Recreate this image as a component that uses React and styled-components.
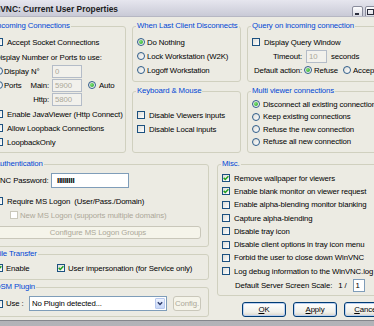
import React from "react";
import styled, { createGlobalStyle } from "styled-components";

const FONT = `"Liberation Sans", Arial, sans-serif`;

const GlobalStyle = createGlobalStyle`
  html, body { margin: 0; padding: 0; }
  body {
    width: 374px; height: 326px; overflow: hidden;
    background: linear-gradient(#8f9096, #b3b3b8);
    font-family: ${FONT}; font-size: 7.8px; letter-spacing: -0.12px; color: #000;
  }
  * { box-sizing: border-box; }
`;

const Window = styled.div`
  width: 410px;
  margin-left: -16px;
  background: #ecebe3;
  border-bottom: 1px solid #85868c;
`;

const TitleBar = styled.div`
  height: 17px;
  display: flex;
  align-items: flex-start;
  padding: 3px 4px 0 1px;
  overflow: hidden;
  background: linear-gradient(#e6e6ee, #c9cad6);
  border-bottom: 1px solid #b6b7c3;
`;

const Title = styled.div`
  flex: 1;
  font-weight: bold;
  font-size: 8.4px;
  letter-spacing: 0;
  line-height: 13px;
  color: #1c1c22;
  white-space: nowrap;
`;

const Controls = styled.div`
  display: flex;
  gap: 2px;
  margin-top: 3px;
`;

const CtrlButton = styled.div`
  width: 11px;
  height: 12px;
  border: 1px solid #8a8c9c;
  border-radius: 2px;
  background: linear-gradient(#fdfdfe, #d6d7e0);
  display: flex;
  align-items: center;
  justify-content: center;
`;

const Body = styled.div`
  display: flex;
  flex-direction: column;
  gap: 6px;
  padding: 4px 6px 3px;
`;

const TopGrid = styled.div`
  display: grid;
  grid-template-columns: 136px 109px 141px;
  column-gap: 6px;
  height: 132px;
`;

const BottomGrid = styled.div`
  display: grid;
  grid-template-columns: 219px 171px;
  column-gap: 8px;
`;

const Stack = styled.div`
  display: flex;
  flex-direction: column;
  gap: ${(p) => p.$gap ?? 4}px;
  min-height: 0;
`;

const Group = styled.fieldset`
  margin: 0;
  min-width: 0;
  border: 1px solid #d0d0bf;
  border-radius: 3px;
  padding: ${(p) => p.$pt ?? 4}px 4px 0;
  height: ${(p) => (p.$h ? `${p.$h}px` : "auto")};
  flex: ${(p) => (p.$grow ? 1 : "none")};
  display: flex;
  flex-direction: column;
`;

const Legend = styled.legend`
  padding: 0 1px;
  margin-left: -1px;
  color: #0046d5;
  line-height: 10px;
  white-space: nowrap;
`;

const Row = styled.div`
  display: flex;
  align-items: center;
  flex: none;
  height: ${(p) => p.$h ?? 14}px;
  gap: ${(p) => p.$gap ?? 0}px;
  margin-top: ${(p) => p.$mt ?? 0}px;
  padding-left: ${(p) => p.$indent ?? 0}px;
  white-space: pre;
  color: ${(p) => (p.$disabled ? "#aca899" : "inherit")};
`;

const Option = styled.label`
  display: inline-flex;
  align-items: center;
  gap: ${(p) => p.$gap ?? 4}px;
  width: ${(p) => (p.$w ? `${p.$w}px` : "auto")};
  margin-left: ${(p) => p.$ml ?? 0}px;
  white-space: pre;
  color: ${(p) => (p.$disabled ? "#aca899" : "inherit")};
`;

const CheckBox = styled.span`
  flex: none;
  width: 8px;
  height: 8px;
  border: 1px solid ${(p) => (p.$disabled ? "#cac8bb" : "#1c5180")};
  background: ${(p) =>
    p.$disabled ? "#fff" : "linear-gradient(135deg, #dcdcd7, #ffffff)"};
  display: flex;
  align-items: center;
  justify-content: center;
`;

const RadioCircle = styled.span`
  flex: none;
  width: 8px;
  height: 8px;
  border-radius: 50%;
  border: 1px solid #2f5d8a;
  background: linear-gradient(135deg, #dcdcd7, #ffffff);
  display: flex;
  align-items: center;
  justify-content: center;
`;

const RadioDot = styled.span`
  width: 4px;
  height: 4px;
  border-radius: 50%;
  background: radial-gradient(circle at 35% 35%, #7ee27a, #21a121);
`;

const Check = ({ checked, disabled }) => (
  <CheckBox $disabled={disabled}>
    {checked && (
      <svg width="6" height="6" viewBox="0 0 6 6">
        <path d="M0.7 2.9 L2.3 4.5 L5.4 1.2" fill="none" stroke="#21a121" strokeWidth="1.5" />
      </svg>
    )}
  </CheckBox>
);

const Radio = ({ checked }) => <RadioCircle>{checked && <RadioDot />}</RadioCircle>;

const Field = styled.input`
  flex: none;
  width: ${(p) => p.$w}px;
  height: ${(p) => p.$hh ?? 13}px;
  margin: 0;
  padding: 0 2px;
  border: 1px solid ${(p) => (p.disabled ? "#b4bcc8" : "#7f9db9")};
  background: ${(p) => (p.disabled ? "#f2f1ec" : "#fff")};
  color: ${(p) => (p.disabled ? "#aca899" : "#000")};
  font: inherit;
  letter-spacing: inherit;
  line-height: 11px;
  outline: none;
`;

const PortGrid = styled.div`
  display: grid;
  grid-template-columns: 36px 21px 30px auto;
  grid-auto-rows: 14px;
  align-items: center;
  flex: none;
`;

const PortLabel = styled.span`
  justify-self: ${(p) => (p.$left ? "start" : "end")};
  padding-right: ${(p) => (p.$left ? 0 : 3)}px;
`;

const AutoCell = styled.div`
  padding-left: 6px;
`;

const PassLabel = styled.span`
  width: 56px;
`;

const PasswordBox = styled.div`
  width: 78px;
  height: 15px;
  border: 1px solid #7f9db9;
  background: #fff;
  padding-left: 5px;
  display: flex;
  align-items: center;
  font-weight: bold;
  letter-spacing: -0.3px;
  font-size: 8px;
`;

const WinButton = styled.button`
  flex: none;
  width: ${(p) => (p.$w ? `${p.$w}px` : "44px")};
  height: ${(p) => p.$hh ?? 15}px;
  margin: ${(p) => p.$m ?? 0};
  padding: 0;
  font: inherit;
  letter-spacing: inherit;
  border-radius: 3px;
  border: 1px solid ${(p) => (p.disabled ? "#c9c7ba" : "#003c74")};
  background: ${(p) =>
    p.disabled ? "#f5f4ea" : "linear-gradient(#ffffff, #f0f0ea 70%, #d8d4c8)"};
  color: ${(p) => (p.disabled ? "#aca899" : "#000")};
  box-shadow: ${(p) =>
    p.disabled ? "none" : "inset 0 0 0 1px #bcd0f0"};
  display: flex;
  align-items: center;
  justify-content: center;
`;

const Combo = styled.div`
  width: 138px;
  height: 15px;
  border: 1px solid #7f9db9;
  background: #fff;
  display: flex;
  align-items: center;
  padding-left: 2px;
  margin-right: 6px;
`;

const ComboText = styled.span`
  flex: 1;
`;

const ComboArrow = styled.span`
  width: 10px;
  height: 11px;
  margin-right: 1px;
  border: 1px solid #b8c9ee;
  border-radius: 1px;
  background: linear-gradient(#eef3fe, #c6d6f8);
  display: flex;
  align-items: center;
  justify-content: center;
`;

const ButtonRow = styled.div`
  display: flex;
  justify-content: flex-end;
  gap: 7px;
  height: 15px;
`;

const ScaleBox = styled.div`
  width: 12px;
  height: 13px;
  border: 1px solid #7f9db9;
  background: #fff;
  padding-left: 2px;
  display: flex;
  align-items: center;
`;

export default function App() {
  return (
    <>
      <GlobalStyle />
      <Window>
        <TitleBar>
          <Title>WinVNC: Current User Properties</Title>
          <Controls>
            <CtrlButton>
              <svg width="7" height="8" viewBox="0 0 7 8">
                <rect x="1" y="5" width="4" height="2" fill="#2b2d3c" />
              </svg>
            </CtrlButton>
            <CtrlButton>
              <svg width="7" height="8" viewBox="0 0 7 8">
                <rect x="0.5" y="1.5" width="6" height="5" fill="none" stroke="#2b2d3c" />
              </svg>
            </CtrlButton>
            <CtrlButton style={{ marginLeft: 1 }}>
              <svg width="7" height="8" viewBox="0 0 7 8">
                <path d="M1 1.5 L6 6.5 M6 1.5 L1 6.5" stroke="#2b2d3c" strokeWidth="1.3" />
              </svg>
            </CtrlButton>
          </Controls>
        </TitleBar>
        <Body>
          <TopGrid>
            <Group $pt={4}>
              <Legend>Incoming Connections</Legend>
              <Row>
                <Option><Check />Accept Socket Connections</Option>
              </Row>
              <Row $mt={1}>Display Number or Ports to use:</Row>
              <PortGrid>
                <Option $gap={1}><Radio />Display</Option>
                <PortLabel $left>N°</PortLabel>
                <Field $w={30} disabled defaultValue="0" />
                <span />
                <Option $gap={1}><Radio />Ports</Option>
                <PortLabel>Main:</PortLabel>
                <Field $w={30} disabled defaultValue="5900" />
                <AutoCell>
                  <Option $gap={3}><Radio checked />Auto</Option>
                </AutoCell>
                <span />
                <PortLabel>Http:</PortLabel>
                <Field $w={30} disabled defaultValue="5800" />
                <span />
              </PortGrid>
              <Row $mt={1}>
                <Option><Check />Enable JavaViewer (Http Connect)</Option>
              </Row>
              <Row>
                <Option><Check />Allow Loopback Connections</Option>
              </Row>
              <Row>
                <Option><Check />LoopbackOnly</Option>
              </Row>
            </Group>
            <Stack>
              <Group $h={61} $pt={4}>
                <Legend>When Last Client Disconnects</Legend>
                <Row><Option $gap={2}><Radio checked />Do Nothing</Option></Row>
                <Row><Option $gap={2}><Radio />Lock Workstation (W2K)</Option></Row>
                <Row><Option $gap={2}><Radio />Logoff Workstation</Option></Row>
              </Group>
              <Group $grow $pt={12}>
                <Legend>Keyboard &amp; Mouse</Legend>
                <Row><Option><Check />Disable Viewers inputs</Option></Row>
                <Row><Option><Check />Disable Local inputs</Option></Row>
              </Group>
            </Stack>
            <Stack>
              <Group $h={61} $pt={4}>
                <Legend>Query on incoming connection</Legend>
                <Row><Option><Check />Display Query Window</Option></Row>
                <Row $indent={21} $gap={4}>
                  Timeout:
                  <Field $w={21} disabled defaultValue="10" />
                  seconds
                </Row>
                <Row $indent={2} $gap={2}>
                  Default action:
                  <Option $gap={2}><Radio checked />Refuse</Option>
                  <Option $gap={2} $ml={3}><Radio />Accept</Option>
                </Row>
              </Group>
              <Group $grow $pt={2}>
                <Legend>Multi viewer connections</Legend>
                <Row $h={12.5}><Option $gap={3}><Radio checked />Disconnect all existing connections</Option></Row>
                <Row $h={12.5}><Option $gap={3}><Radio />Keep existing connections</Option></Row>
                <Row $h={12.5}><Option $gap={3}><Radio />Refuse the new connection</Option></Row>
                <Row $h={12.5}><Option $gap={3}><Radio />Refuse all new connection</Option></Row>
              </Group>
            </Stack>
          </TopGrid>
          <BottomGrid>
            <Stack $gap={2}>
              <Group $h={88} $pt={4}>
                <Legend>Authentication</Legend>
                <Row $h={15}>
                  <PassLabel>VNC Password:</PassLabel>
                  <PasswordBox>IIIIIIIII</PasswordBox>
                </Row>
                <Row $mt={6}>
                  <Option><Check />{"Require MS Logon  (User/Pass./Domain)"}</Option>
                </Row>
                <Row $indent={15}>
                  <Option $disabled $gap={2}><Check disabled />New MS Logon (supports multiple domains)</Option>
                </Row>
                <WinButton disabled $w={206} $hh={13} $m="4px 0 0">Configure MS Logon Groups</WinButton>
              </Group>
              <Group $h={31} $pt={2}>
                <Legend>File Transfer</Legend>
                <Row>
                  <Option $w={62} $gap={3}><Check checked />Enable</Option>
                  <Option $gap={3}><Check checked />User impersonation (for Service only)</Option>
                </Row>
              </Group>
              <Group $h={35} $pt={4}>
                <Legend>DSM Plugin</Legend>
                <Row $h={15}>
                  <Option $w={34} $gap={3}><Check />Use :</Option>
                  <Combo>
                    <ComboText>No Plugin detected...</ComboText>
                    <ComboArrow>
                      <svg width="6" height="5" viewBox="0 0 6 5">
                        <path d="M0.8 1.2 L3 3.4 L5.2 1.2" fill="none" stroke="#2a3a6a" strokeWidth="1.4" />
                      </svg>
                    </ComboArrow>
                  </Combo>
                  <WinButton disabled $w={28}>Config.</WinButton>
                </Row>
              </Group>
            </Stack>
            <Stack $gap={6}>
              <Group $h={137} $pt={2.5}>
                <Legend>Misc.</Legend>
                <Row $h={13.3}><Option><Check checked />Remove wallpaper for viewers</Option></Row>
                <Row $h={13.3}><Option><Check checked />Enable blank monitor on viewer request</Option></Row>
                <Row $h={13.3}><Option><Check />Enable alpha-blending monitor blanking</Option></Row>
                <Row $h={13.3}><Option><Check />Capture alpha-blending</Option></Row>
                <Row $h={13.3}><Option><Check />Disable tray icon</Option></Row>
                <Row $h={13.3}><Option><Check />Disable client options in tray icon menu</Option></Row>
                <Row $h={13.3}><Option><Check />Forbid the user to close down WinVNC</Option></Row>
                <Row $h={13.3}><Option><Check />Log debug information to the WinVNC.log file</Option></Row>
                <Row $mt={1} $indent={13} $gap={6}>
                  Default Server Screen Scale:
                  <span>1 /</span>
                  <ScaleBox>1</ScaleBox>
                </Row>
              </Group>
              <ButtonRow>
                <WinButton><u>O</u>K</WinButton>
                <WinButton><u>A</u>pply</WinButton>
                <WinButton><u>C</u>ancel</WinButton>
              </ButtonRow>
            </Stack>
          </BottomGrid>
        </Body>
      </Window>
    </>
  );
}
